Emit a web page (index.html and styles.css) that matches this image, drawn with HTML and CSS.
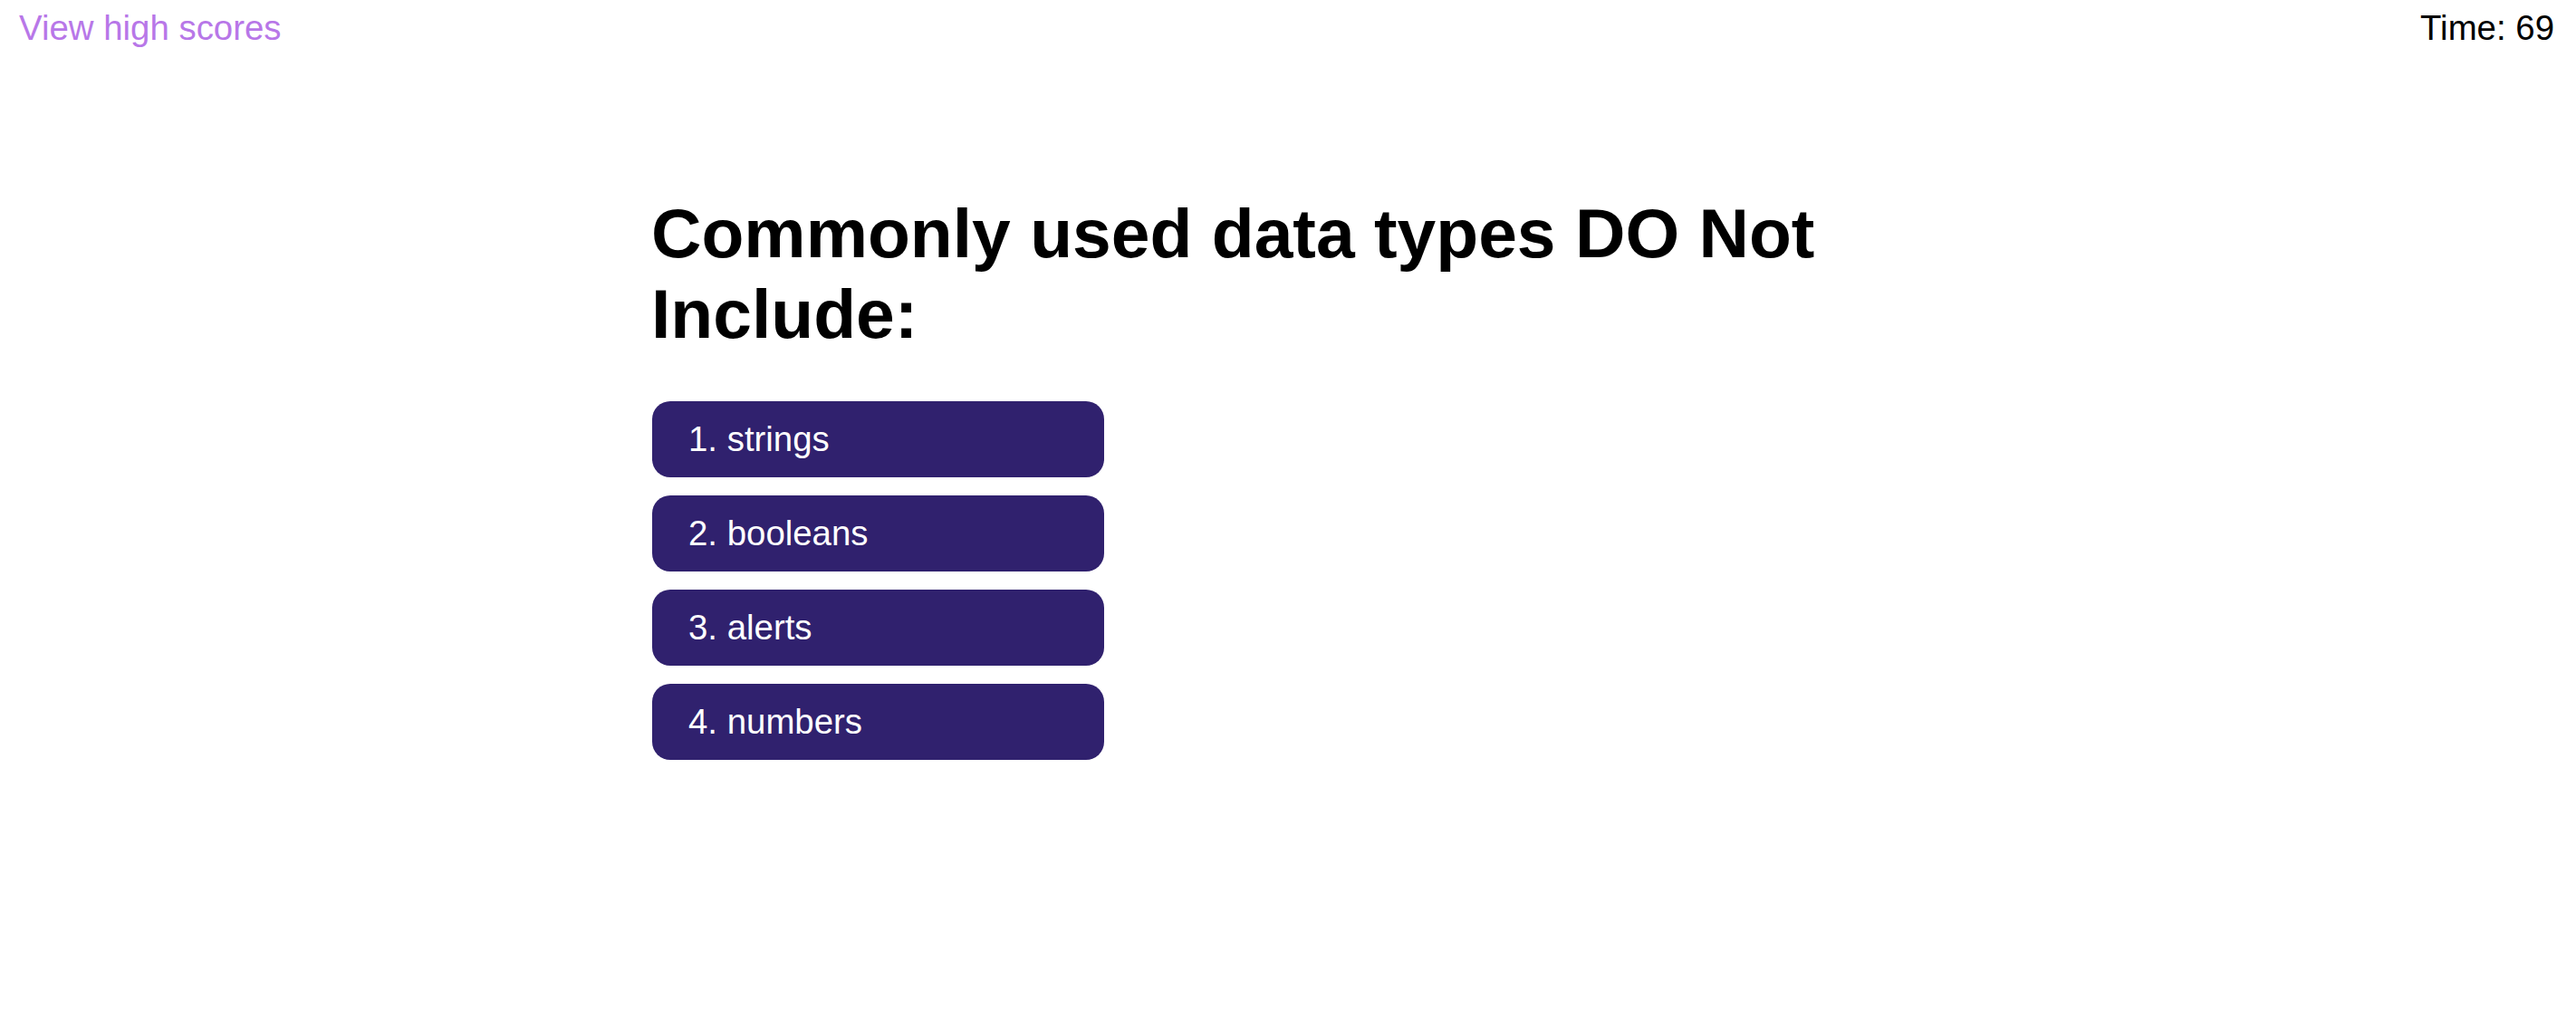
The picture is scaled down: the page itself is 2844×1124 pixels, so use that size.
FILE: index.html
```html
<!DOCTYPE html>
<html lang="en">
<head>
<meta charset="utf-8">
<title>Code Quiz</title>
<link rel="stylesheet" href="styles.css">
</head>
<body>
<header class="topbar">
  <a class="scores-link" href="#">View high scores</a>
  <span class="timer">Time: 69</span>
</header>
<main class="quiz">
  <h1 class="question">Commonly used data types DO Not Include:</h1>
  <div class="choices">
    <button class="choice">1. strings</button>
    <button class="choice">2. booleans</button>
    <button class="choice">3. alerts</button>
    <button class="choice">4. numbers</button>
  </div>
</main>
</body>
</html>
```

FILE: styles.css
```css
html, body {
  margin: 0;
  background: #ffffff;
}

body {
  font-family: "Liberation Sans", Arial, Helvetica, sans-serif;
  font-size: 38.4px;
  color: #000000;
}

.topbar {
  display: flex;
  justify-content: space-between;
  align-items: baseline;
  padding: 8.5px 24px 0 21px;
}

.scores-link {
  color: #b877e8;
  text-decoration: none;
}

.timer {
  color: #000000;
}

.quiz {
  width: 1406px;
  margin: 160px auto 0;
}

.question {
  font-size: 76.8px;
  font-weight: bold;
  line-height: normal;
  margin: 0 0 52px;
}

.choices {
  display: flex;
  flex-direction: column;
  align-items: flex-start;
  gap: 20px;
  padding-left: 1px;
}

.choice {
  width: 499px;
  height: 84px;
  padding: 0 0 0 40px;
  border: none;
  border-radius: 20px;
  background: #30216e;
  color: #ffffff;
  font: inherit;
  text-align: left;
  cursor: pointer;
}
```
